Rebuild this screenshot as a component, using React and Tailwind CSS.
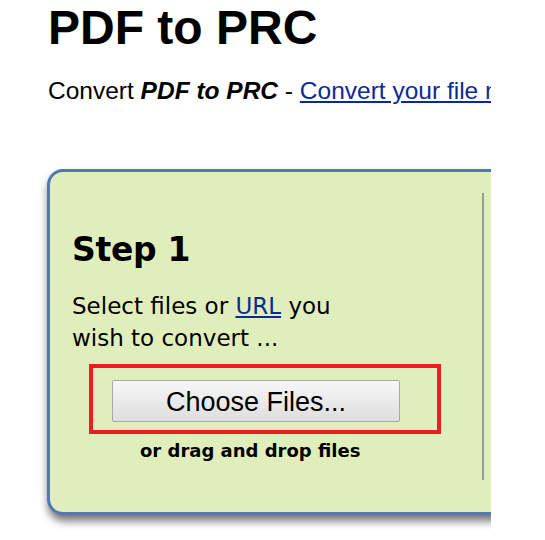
import React from 'react';

const verdana = { fontFamily: '"DejaVu Sans", Verdana, sans-serif' };
const arial = { fontFamily: '"Liberation Sans", Arial, sans-serif' };

const StepOne = () => (
  <div className="w-[432px] shrink-0 pl-[22px] pt-[59px]" style={verdana}>
    <h2 className="text-[33px] font-bold leading-[1.164] tracking-[-0.3px] text-black">Step 1</h2>
    <p className="mt-[20px] w-[290px] text-[23px] leading-[32px] text-black">
      Select files or{' '}
      <a href="#" className="text-[#0b2b94] underline">
        URL
      </a>{' '}
      you wish to convert ...
    </p>
    <div className="mt-[10px] ml-[17px] w-[352px] h-[70px] border-4 border-[#ee1c25] pl-[19px] pt-[12px]">
      <button
        type="button"
        className="w-[288px] h-[42px] border border-[#a9a9a9] rounded-[2px] bg-gradient-to-b from-[#f7f7f7] to-[#dedede] pt-[3px] text-[27px] leading-none text-black"
        style={arial}
      >
        Choose Files...
      </button>
    </div>
    <div className="mt-[6px] ml-[68px] text-[18px] font-bold leading-[21px] text-black">
      or drag and drop files
    </div>
  </div>
);

export default function App() {
  return (
    <div className="w-[491px] min-h-[540px] overflow-hidden bg-white">
      <div className="pl-12" style={arial}>
        <h1 className="text-[48px] font-bold leading-[1.149] text-black">PDF to PRC</h1>
        <p className="mt-[22px] whitespace-nowrap text-[24.5px] leading-[1.149] text-black">
          Convert <b className="italic">PDF to PRC</b> -{' '}
          <a href="#" className="text-[#0b2b94] underline">
            Convert your file now
          </a>
        </p>
      </div>
      <div className="mt-[64px] ml-[47px] w-[640px] h-[346px] flex border-[3px] border-[#5675b5] rounded-[16px] bg-[#e0eebc] shadow-[1px_6px_9px_rgba(0,0,0,0.55)]">
        <StepOne />
        <div className="mt-[21px] h-[287px] w-[100px] border-l-2 border-[#9a9a9a]" />
      </div>
    </div>
  );
}
